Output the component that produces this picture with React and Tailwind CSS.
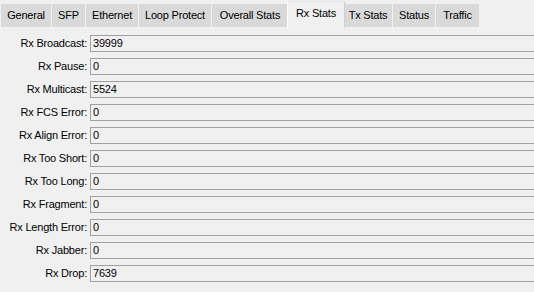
const tabs = [
  { name: 'General', w: 'w-[50px]' },
  { name: 'SFP', w: 'w-[33px]' },
  { name: 'Ethernet', w: 'w-[52px]' },
  { name: 'Loop Protect', w: 'w-[72px]' },
  { name: 'Overall Stats', w: 'w-[76px]' },
  { name: 'Rx Stats', w: 'w-[58px]', active: true },
  { name: 'Tx Stats', w: 'w-[48px]' },
  { name: 'Status', w: 'w-[42px]' },
  { name: 'Traffic', w: 'w-[43px]' },
];

const rows = [
  ['Rx Broadcast:', '39999'],
  ['Rx Pause:', '0'],
  ['Rx Multicast:', '5524'],
  ['Rx FCS Error:', '0'],
  ['Rx Align Error:', '0'],
  ['Rx Too Short:', '0'],
  ['Rx Too Long:', '0'],
  ['Rx Fragment:', '0'],
  ['Rx Length Error:', '0'],
  ['Rx Jabber:', '0'],
  ['Rx Drop:', '7639'],
];

export default function App() {
  return (
    <div
      className="w-[534px] h-[292px] bg-[#f0f0f0] text-[11px] tracking-[-0.2px] text-black overflow-hidden"
      style={{ fontFamily: '"Liberation Sans", Arial, sans-serif' }}
    >
      <div className="flex h-[28px] pl-[1px] gap-[1px]">
        {tabs.map(t =>
          t.active ? (
            <div
              key={t.name}
              className={`${t.w} -mx-[2px] mt-[1px] h-[27px] bg-[#f0f0f0] border-t border-l border-r border-t-[#e3e3e3] border-l-[#ffffff] border-r-[#d0d0d0] flex items-center justify-center pb-[3px] relative z-10`}
            >
              {t.name}
            </div>
          ) : (
            <div
              key={t.name}
              className={`${t.w} mt-[4px] h-[23px] bg-[#d9d9d9] flex items-center justify-center`}
            >
              {t.name}
            </div>
          )
        )}
      </div>
      <div className="flex flex-col gap-[6px] pt-[7px]">
        {rows.map(([label, value]) => (
          <div key={label} className="flex items-center h-[17px]">
            <div className="w-[90px] shrink-0 text-right pr-[3px]">{label}</div>
            <div className="flex-1 h-[17px] border-t border-b border-l border-[#a0a0a0] bg-[#f0f0f0] flex items-center pl-[2px]">
              {value}
            </div>
          </div>
        ))}
      </div>
    </div>
  );
}
